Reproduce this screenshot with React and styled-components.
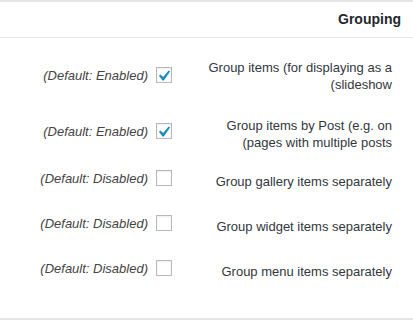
import styled, { createGlobalStyle } from "styled-components";

const GlobalStyle = createGlobalStyle`
  html, body {
    margin: 0;
    padding: 0;
    background: #fff;
  }
  body {
    font-family: "Liberation Sans", Arial, sans-serif;
  }
`;

const settings = [
  {
    id: "group_items",
    label: "Group items (for displaying as a (slideshow",
    enabled: true,
  },
  {
    id: "group_by_post",
    label: "Group items by Post (e.g. on (pages with multiple posts",
    enabled: true,
  },
  { id: "group_gallery", label: "Group gallery items separately", enabled: false },
  { id: "group_widget", label: "Group widget items separately", enabled: false },
  { id: "group_menu", label: "Group menu items separately", enabled: false },
];

const CheckMark = () => (
  <svg width="16" height="16" viewBox="3 1.5 15 15" aria-hidden="true">
    <path
      d="M14.83 4.89l1.34.94-5.81 8.38H9.02L5.78 9.67l1.34-1.25 2.57 2.4z"
      fill="#1e8cbe"
    />
  </svg>
);

const App = () => {
  return (
    <>
      <GlobalStyle />
      <Panel dir="rtl">
        <Header>
          <Title>Grouping</Title>
        </Header>
        <List>
          {settings.map((s) => (
            <Row key={s.id}>
              <Label>{s.label}</Label>
              <Control>
                <Box $checked={s.enabled}>{s.enabled && <CheckMark />}</Box>
                <Hint>({s.enabled ? "Default: Enabled" : "Default: Disabled"})</Hint>
              </Control>
            </Row>
          ))}
        </List>
      </Panel>
    </>
  );
};

const Panel = styled.div`
  box-sizing: border-box;
  height: 320px;
  border-top: 2px solid #e6e6e6;
  border-bottom: 2px solid #e6e6e6;
  direction: rtl;
`;

const Header = styled.div`
  height: 35px;
  border-bottom: 1px solid #e6e6e6;
  display: flex;
  align-items: center;
  padding-right: 12px;
`;

const Title = styled.h2`
  margin: 0;
  font-size: 14px;
  font-weight: bold;
  line-height: 35px;
  color: #23282d;
`;

const List = styled.div`
  padding-top: 5px;
  display: flex;
  flex-direction: column;
`;

const Label = styled.div`
  width: 190px;
  margin-right: 21px;
  padding: 11px 0 4px;
  font-size: 13px;
  line-height: 17px;
  color: #32373c;
  text-align: right;
`;

const Row = styled.div`
  display: flex;
  align-items: center;

  &:first-child ${Label} {
    padding: 16px 0 13px;
  }
`;

const Control = styled.div`
  display: flex;
  align-items: center;
  gap: 8px;
  margin-right: 30px;
  padding: 15px 0 14px;
`;

const Box = styled.span`
  box-sizing: border-box;
  width: 16px;
  height: 16px;
  border: 1px solid #b4b9be;
  background: #fff;
  box-shadow: inset 0 1px 2px rgba(0, 0, 0, 0.07);
  display: flex;
  align-items: center;
  justify-content: center;
  svg {
    flex: none;
  }
`;

const Hint = styled.span`
  font-size: 13px;
  font-style: italic;
  line-height: 15px;
  color: #444;
`;

export default App;
